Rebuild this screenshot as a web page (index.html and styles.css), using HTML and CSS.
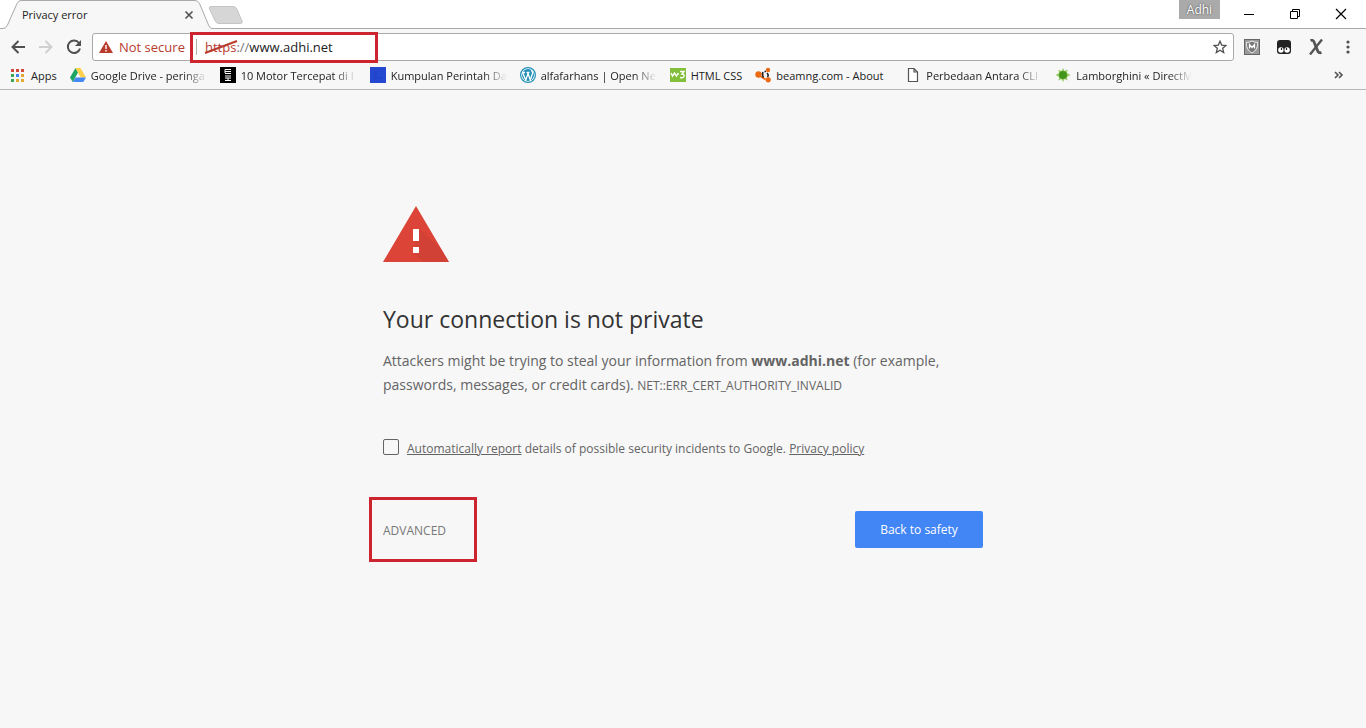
FILE: index.html
```html
<!DOCTYPE html>
<html lang="en">
<head>
  <meta charset="utf-8">
  <title>Privacy error</title>
  <link rel="stylesheet" href="styles.css">
</head>
<body>
  <header class="browser">
    <div class="titlebar">
      <div class="tab">
        <svg class="tab-shape" width="212" height="29" viewBox="0 0 212 29">
          <path d="M0 29V28.500H3Q6 28.500 7.500 25L17 3.500Q18.500 .5 21 .5H195Q198 .5 199.500 3.500L208.500 25Q210 28.500 212 28.500V29Z" fill="#f7f7f7"/>
          <path d="M0 28.500H3Q6 28.500 7.500 25L17 3.500Q18.500 .5 21 .5H195Q198 .5 199.500 3.500L208.500 25Q210 28.500 212 28.500" fill="none" stroke="#a9a9a9"/>
        </svg>
        <span class="tab-title">Privacy error</span>
        <button class="tab-close" aria-label="Close tab">
          <svg width="10" height="10" viewBox="0 0 10 10"><path d="M1.500 1.500L8.500 8.500M8.500 1.500L1.500 8.500" stroke="#555" stroke-width="1.700"/></svg>
        </button>
      </div>
      <button class="new-tab" aria-label="New tab">
        <svg width="36" height="18" viewBox="0 0 36 18"><path d="M3 .5H25Q27.500 .5 28.500 2.500L34 15Q35 17.500 32.500 17.500H11Q8.500 17.500 7.500 15.500L1.500 3Q.5 .5 3 .5Z" fill="#d6d6d6" stroke="#c4c4c4"/></svg>
      </button>
      <button class="profile">Adhi</button>
      <div class="window-buttons">
        <button aria-label="Minimize"><svg width="12" height="12" viewBox="0 0 12 12"><path d="M1 6.500H11" stroke="#000"/></svg></button>
        <button aria-label="Restore"><svg width="12" height="12" viewBox="0 0 12 12"><path d="M1.500 3.500H8.500V10.500H1.500ZM3.500 3.500V1.500H10.500V8.500H8.500" fill="none" stroke="#000"/></svg></button>
        <button aria-label="Close"><svg width="12" height="12" viewBox="0 0 12 12"><path d="M1 1L11 11M11 1L1 11" stroke="#000" stroke-width="1.200"/></svg></button>
      </div>
    </div>

    <div class="toolbar">
      <button aria-label="Back"><svg width="16" height="16" viewBox="0 0 16 16"><path d="M15 8H2.500M8.500 2L2.500 8L8.500 14" fill="none" stroke="#505050" stroke-width="2"/></svg></button>
      <button aria-label="Forward"><svg width="16" height="16" viewBox="0 0 16 16"><path d="M1 8H13.500M7.500 2L13.500 8L7.500 14" fill="none" stroke="#d0d0d0" stroke-width="2"/></svg></button>
      <button aria-label="Reload"><svg width="16" height="16" viewBox="0 0 16 16"><path d="M13 4A6.200 6.200 0 1 0 14 9.500" fill="none" stroke="#505050" stroke-width="2"/><path d="M15 1V7H9Z" fill="#505050"/></svg></button>
      <div class="omnibox">
        <svg width="14" height="12" viewBox="0 0 14 12"><path d="M7 0L14 12H0Z" fill="#b83b2e"/><path d="M7 4V8M7 9V10.500" stroke="#fff" stroke-width="1.400"/></svg>
        <span class="not-secure">Not secure</span>
        <div class="url">
          <label for="address"><span class="scheme">https<svg class="strike" width="34" height="14" viewBox="0 0 34 14"><path d="M1 13L33 1" stroke="#b83b2e" stroke-width="2"/></svg></span>://</label>
          <input id="address" type="text" value="www.adhi.net">
          <span class="mark mark-url"></span>
        </div>
        <button class="star" aria-label="Bookmark"><svg width="14" height="14" viewBox="0 0 14 14"><path d="M7 1.200L8.700 5.100L13 5.500L9.700 8.300L10.700 12.600L7 10.300L3.300 12.600L4.300 8.300L1 5.500L5.300 5.100Z" fill="none" stroke="#505050" stroke-width="1.300"/></svg></button>
      </div>
      <div class="extensions">
        <button aria-label="Shield extension"><svg width="16" height="16" viewBox="0 0 16 16"><rect x=".5" y=".5" width="15" height="15" fill="#999" stroke="#666"/><path d="M2.500 3.500Q5.500 3.500 8 2Q10.500 3.500 13.500 3.500Q14 11 8 14Q2 11 2.500 3.500Z" fill="#777" stroke="#eee"/><path d="M5.500 9.500V5.500L8 8.500L10.500 5.500V9.500" fill="none" stroke="#fff" stroke-width="1.300"/></svg></button>
        <button aria-label="Script extension"><svg width="16" height="16" viewBox="0 0 16 16"><rect x="1" y="1" width="14" height="14" rx="3" fill="#222"/><circle cx="4.900" cy="11" r="2.700" fill="#fff"/><circle cx="11.100" cy="11" r="2.700" fill="#fff"/><path d="M5.500 9V11M10.500 9V11" stroke="#222" stroke-width="1.200"/></svg></button>
        <button aria-label="X extension"><svg width="16" height="16" viewBox="0 0 16 16"><path d="M2.500 1.500Q5.500 .5 6.500 4L9.500 11.500Q10.500 14.500 13.500 13.500" fill="none" stroke="#555" stroke-width="2.800"/><path d="M14 .5L2 15.500" stroke="#555" stroke-width="2.400"/></svg></button>
        <button aria-label="Menu"><svg width="16" height="16" viewBox="0 0 16 16"><g fill="#505050"><circle cx="8" cy="3" r="1.600"/><circle cx="8" cy="8" r="1.600"/><circle cx="8" cy="13" r="1.600"/></g></svg></button>
      </div>
    </div>

    <nav class="bookmarks">
      <a href="#"><svg width="16" height="16" viewBox="0 0 16 16"><path d="M1 2H4V5H1ZM6 2H9V5H6ZM11 2H14V5H11Z" fill="#d3483c"/><path d="M1 7H4V10H1Z" fill="#3aa757"/><path d="M6 7H9V10H6Z" fill="#4385f0"/><path d="M11 7H14V10H11Z" fill="#e2a82f"/><path d="M1 12H4V15H1Z" fill="#3aa757"/><path d="M6 12H9V15H6ZM11 12H14V15H11Z" fill="#e2a82f"/></svg><span>Apps</span></a>
      <a href="#"><svg width="16" height="16" viewBox="0 0 16 16"><path d="M5.500 1L0 10.500L2.700 15L8 5.500Z" fill="#1fa463"/><path d="M5.500 1H10.500L16 10.500H10.700Z" fill="#ffd04b"/><path d="M5.500 10.500H16L13.300 15H2.700Z" fill="#4688f4"/></svg><span class="long fade">Google Drive - peringa</span></a>
      <a href="#"><svg width="16" height="16" viewBox="0 0 16 16"><rect width="16" height="16" fill="#000"/><path d="M5 6V2.500H11M5 4.500H11M5 6.500H11M5 9H11M5 11H11M5 13.500H11M8 11V13.500" fill="none" stroke="#fff"/></svg><span class="long fade">10 Motor Tercepat di I</span></a>
      <a href="#"><svg width="16" height="16" viewBox="0 0 16 16"><rect width="16" height="16" fill="#2449d0"/><path d="M4 5H7M4 8H7M4 11H7M9 11H12" stroke="#2040b4"/></svg><span class="long fade">Kumpulan Perintah Da</span></a>
      <a href="#"><svg width="16" height="16" viewBox="0 0 16 16"><circle cx="8" cy="8" r="7.400" fill="#fff" stroke="#218fb8" stroke-width="1.200"/><circle cx="8" cy="8" r="6" fill="#218fb8"/><path d="M2.500 5.500L5.800 13L8 6.500L10.300 13L12.700 6Q12.500 4 11 3.500M2 5.500H5M6.500 5.500H9.500" fill="none" stroke="#fff" stroke-width="1.300"/></svg><span class="long fade">alfafarhans | Open Net</span></a>
      <a href="#"><svg width="16" height="16" viewBox="0 0 16 16"><rect y="1" width="16" height="14" fill="#83bf3a"/><path d="M1 6L2.500 9L4.500 6L6.500 9L8.500 6M10 4.500H14L12 7Q14.500 7 14 9.500Q13 11.500 10 10.500" fill="none" stroke="#fff" stroke-width="1.400"/></svg><span>HTML CSS</span></a>
      <a href="#"><svg width="16" height="16" viewBox="0 0 16 16"><circle cx="3.500" cy="7.500" r="3.200" fill="#ec6a13"/><circle cx="13" cy="3" r="2.200" fill="#ec6a13"/><circle cx="13.200" cy="12.800" r="2.600" fill="#ec6a13"/><path d="M6 9.500L10.500 12.500" stroke="#ec6a13" stroke-width="2"/><path d="M8 5Q7 8 8.500 10.500M9.500 4.500H11M12 6Q14 8 12.500 10" fill="none" stroke="#222" stroke-width="1.600"/></svg><span class="long">beamng.com - About</span></a>
      <a href="#"><svg width="16" height="16" viewBox="0 0 16 16"><path d="M3.500 1.500H9L12.500 5V14.500H3.500ZM9 1.500V5H12.500" fill="#fff" stroke="#555" stroke-width="1.200"/></svg><span class="long fade">Perbedaan Antara CLI</span></a>
      <a href="#"><svg width="16" height="16" viewBox="0 0 16 16"><path d="M8 1L9.500 4L12.500 2.500L12 6L15.500 8L12 10L12.500 13.500L9.500 12L8 15L6.500 12L3.500 13.500L4 10L.5 8L4 6L3.500 2.500L6.500 4Z" fill="#9bc96b"/><circle cx="8" cy="8" r="4" fill="#43961b"/></svg><span class="long fade">Lamborghini « DirectM</span></a>
      <button class="more" aria-label="More bookmarks"><svg width="10" height="8" viewBox="0 0 10 8"><path d="M1 1L4 4L1 7M5 1L8 4L5 7" fill="none" stroke="#505050" stroke-width="1.600"/></svg></button>
    </nav>
  </header>

  <main class="interstitial">
    <svg class="warning" width="66" height="56" viewBox="0 0 66 56">
      <path d="M33 0L66 56H0Z" fill="#db4437"/>
      <path d="M36 23L58 43L66 56H41L30 47Z" fill="#c93f33" opacity=".6"/>
      <path d="M30 23H36V35H30ZM30 41H36V47H30Z" fill="#fff"/>
    </svg>
    <h1>Your connection is not private</h1>
    <p class="message">Attackers might be trying to steal your information from <strong>www.adhi.net</strong> (for example, passwords, messages, or credit cards). <span class="error-code">NET::ERR_CERT_AUTHORITY_INVALID</span></p>
    <div class="report">
      <input id="report" type="checkbox">
      <label for="report"><a href="#">Automatically report</a> details of possible security incidents to Google. <a href="#">Privacy policy</a></label>
    </div>
    <div class="actions">
      <div class="details">
        <button class="advanced">ADVANCED</button>
        <span class="mark mark-advanced"></span>
      </div>
      <button class="primary">Back to safety</button>
    </div>
  </main>
</body>
</html>
```
FILE: styles.css
```css
* {
  box-sizing: border-box;
}
body {
  margin: 0;
  min-height: 100vh;
  background: #f7f7f7;
  color: #646464;
  font-family: "Segoe UI", "Open Sans", "Noto Sans", sans-serif;
}
button {
  display: flex;
  align-items: center;
  justify-content: center;
  padding: 0;
  border: 0;
  background: none;
  font-family: inherit;
}
svg {
  display: block;
  flex-shrink: 0;
}

/* browser frame */
.browser {
  border-bottom: 1px solid #b6b6b6;
  color: #222;
}
.titlebar {
  display: flex;
  height: 29px;
  padding-right: 2px;
  background: linear-gradient(#a9a9a9, #a9a9a9) bottom / 100% 1px no-repeat #fff;
}
.tab {
  position: relative;
  display: flex;
  align-items: center;
  justify-content: space-between;
  width: 212px;
  padding: 0 18px 0 22px;
  font-size: 11px;
}
.tab-shape {
  position: absolute;
  top: 0;
  left: 0;
}
.tab-title, .tab-close {
  position: relative;
}
.new-tab {
  align-self: center;
  margin-left: -4px;
  height: 18px;
}
.profile {
  align-self: flex-start;
  width: 41px;
  height: 19px;
  margin-left: auto;
  background: #aaa;
  color: #fff;
  font-size: 12px;
  text-shadow: 0 0 2px #333;
}
.window-buttons {
  display: flex;
  margin-left: 6px;
}
.window-buttons button {
  width: 46px;
  height: 27px;
}
.toolbar {
  display: flex;
  align-items: center;
  gap: 12px;
  height: 36px;
  padding: 0 10px;
}
.omnibox {
  display: flex;
  flex: 1;
  align-items: center;
  height: 28px;
  margin-left: -2px;
  padding: 0 6px;
  background: #fff;
  border: 1px solid #a9a9a9;
  border-radius: 3px;
  font-size: 13px;
}
.not-secure {
  width: 77px;
  margin-left: 6px;
  white-space: nowrap;
  color: #b83b2e;
}
.url {
  position: relative;
  display: flex;
  flex: 1;
  align-items: center;
  height: 16px;
  padding-left: 8px;
  border-left: 1px solid #b0b0b0;
}
.url label {
  color: #777;
}
.url input {
  flex: 1;
  padding: 0;
  border: 0;
  outline: 0;
  color: #222;
  font: inherit;
}
.scheme {
  position: relative;
  color: #b83b2e;
}
.strike {
  position: absolute;
  top: 2px;
  left: -1px;
}
.mark {
  position: absolute;
  border: 3px solid #cd2530;
  pointer-events: none;
}
.mark-url {
  top: -7px;
  left: -7px;
  width: 188px;
  height: 31px;
}
.extensions {
  display: flex;
  gap: 16px;
  margin-left: -2px;
}
.bookmarks {
  display: flex;
  align-items: center;
  gap: 13px;
  height: 24px;
  padding: 0 22px 4px 10px;
  font-size: 11px;
}
.bookmarks a {
  display: flex;
  align-items: center;
  gap: 5px;
  color: #222;
  text-decoration: none;
  white-space: nowrap;
}
.long {
  width: 116px;
}
.fade {
  overflow: hidden;
  -webkit-mask-image: linear-gradient(to right, #000 80%, transparent);
  mask-image: linear-gradient(to right, #000 80%, transparent);
}
.more {
  margin-left: auto;
}

/* warning page */
.interstitial {
  width: 100%;
  max-width: 600px;
  margin: 0 auto;
  padding-top: 116px;
}
h1 {
  margin: 41px 0 14px;
  color: #333;
  font-size: 23px;
  font-weight: 400;
  line-height: 32px;
}
.message {
  margin: 0;
  font-size: 14px;
  line-height: 24px;
}
.error-code {
  font-size: 12px;
}
.report {
  display: flex;
  align-items: flex-start;
  gap: 8px;
  margin-top: 41px;
  font-size: 12px;
  line-height: 20px;
}
.report input {
  appearance: none;
  width: 16px;
  height: 16px;
  margin: 0;
  border: 1px solid #646464;
  border-radius: 2px;
}
.report a {
  color: inherit;
}
.actions {
  display: flex;
  align-items: flex-start;
  justify-content: space-between;
  margin-top: 52px;
}
.details {
  position: relative;
}
.advanced {
  height: 38px;
  color: #777;
  font-size: 12px;
}
.mark-advanced {
  top: -14px;
  left: -14px;
  width: 108px;
  height: 65px;
}
.primary {
  min-width: 128px;
  height: 37px;
  padding: 0 24px;
  border-radius: 2px;
  background: #4285f4;
  color: #fff;
  font-size: 12px;
}
```
